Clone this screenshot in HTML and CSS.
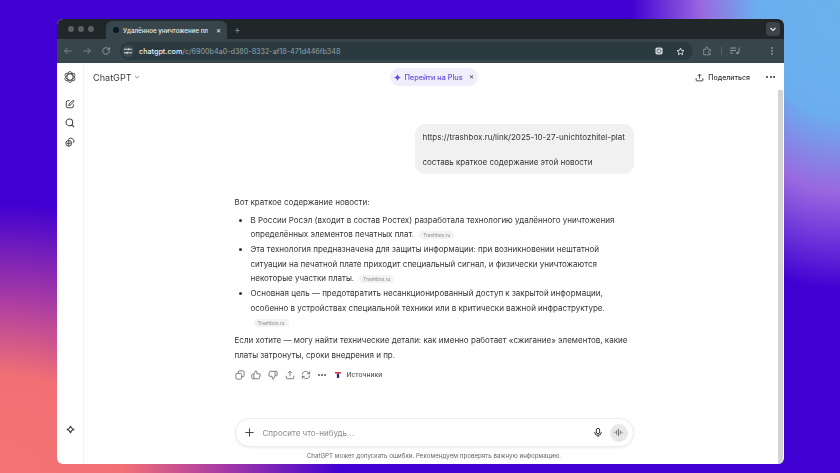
FILE: index.html
```html
<!DOCTYPE html>
<html lang="ru">
<head>
<meta charset="utf-8">
<title>ChatGPT</title>
<link rel="stylesheet" href="styles.css">
</head>
<body>
<div class="window">
  <div class="tabbar">
    <div class="lights"><i></i><i></i><i></i></div>
    <div class="tab">
      <span class="favicon"></span>
      <span class="tab-title">Удалённое уничтожение пл</span>
      <span class="tab-close">✕</span>
    </div>
    <span class="new-tab">+</span>
    <span class="tab-menu"><svg width="8" height="8" viewBox="0 0 8 8"><path d="M1.500 3 4 5.500 6.500 3" fill="none" stroke="#e4e8ea" stroke-width="1.200"/></svg></span>
  </div>
  <div class="toolbar">
    <svg class="nav" width="10" height="10" viewBox="0 0 10 10"><path d="M8.500 5h-7M4.500 2 1.500 5l3 3" fill="none" stroke="#74858c" stroke-width="1"/></svg>
    <svg class="nav" width="10" height="10" viewBox="0 0 10 10"><path d="M1.500 5h7M5.500 2l3 3-3 3" fill="none" stroke="#74858c" stroke-width="1"/></svg>
    <svg class="nav" width="10" height="10" viewBox="0 0 10 10"><path d="M8.300 5A3.300 3.300 0 1 1 7.300 2.600L8.500 3.700M8.500 1.500v2.200H6.300" fill="none" stroke="#8a9aa0" stroke-width="1"/></svg>
    <div class="omnibox">
      <span class="tune"><svg width="8" height="8" viewBox="0 0 9 9"><path d="M0 2.500h4M6 2.500h3M0 6.500h2.500M4.500 6.500h4.500" stroke="#e4e8ea" stroke-width="1" fill="none"/><circle cx="5" cy="2.500" r="1.100" fill="#e4e8ea"/><circle cx="3.500" cy="6.500" r="1.100" fill="#e4e8ea"/></svg></span>
      <span class="url"><b>chatgpt.com</b>/c/6900b4a0-d380-8332-af18-471d446fb348</span>
      <span class="omni-end">
        <svg width="8" height="8" viewBox="0 0 9 9"><rect x=".5" y=".5" width="8" height="8" rx="2" fill="#d4dadc"/><circle cx="4.500" cy="4.500" r="2.200" fill="none" stroke="#56666c"/></svg>
        <svg width="9" height="9" viewBox="0 0 24 24"><path d="m12 3 2.800 5.900 6.400.8-4.700 4.400 1.200 6.400-5.700-3.100-5.700 3.100 1.200-6.400-4.700-4.400 6.400-.8z" fill="none" stroke="#e4e8ea" stroke-width="2.400"/></svg>
      </span>
    </div>
    <svg class="ext" width="10" height="10" viewBox="0 0 24 24"><path d="M4 8h5V5a2.500 2.500 0 0 1 5 0v3h6v5h-2a2.500 2.500 0 0 0 0 5h2v3H4z" fill="none" stroke="#8c9a9f" stroke-width="2"/></svg>
    <span class="tool-sep"></span>
    <svg class="media" width="10" height="8" viewBox="0 0 10 8"><path d="M0 1h6M0 3.500h6M0 6h3M9 .5v5" stroke="#8c9a9f" fill="none"/><circle cx="7.500" cy="6" r="1.300" fill="#8c9a9f"/></svg>
    <span class="kebab"><i></i><i></i><i></i></span>
  </div>
  <div class="page">
    <aside class="sidebar">
      <svg class="logo" width="12" height="12" viewBox="0 0 24 24" fill="none" stroke="#505050" stroke-width="1.800"><ellipse cx="12" cy="12" rx="6" ry="11"/><ellipse cx="12" cy="12" rx="6" ry="11" transform="rotate(60 12 12)"/><ellipse cx="12" cy="12" rx="6" ry="11" transform="rotate(120 12 12)"/></svg>
      <div class="side-tools">
        <svg width="10" height="10" viewBox="0 0 24 24" fill="none" stroke="#444" stroke-width="2.400"><path d="M11 4H7a4 4 0 0 0-4 4v9a4 4 0 0 0 4 4h9a4 4 0 0 0 4-4v-4"/><path d="M19 3.500a2 2 0 0 1 2.500 2.500L13 14.500l-4 1 1-4z"/></svg>
        <svg width="10" height="10" viewBox="0 0 24 24" fill="none" stroke="#444" stroke-width="2.600"><circle cx="10.500" cy="10.500" r="8"/><path d="m16.500 16.500 5.500 5.500"/></svg>
        <svg width="10" height="10" viewBox="0 0 24 24" fill="none" stroke="#444" stroke-width="2.400"><circle cx="9" cy="15" r="7"/><path d="M8 6a7 7 0 0 1 10-2 7 7 0 0 1 2 10M4 15h10M9 8v14"/></svg>
      </div>
      <svg class="spark" width="9" height="9" viewBox="0 0 24 24" fill="none" stroke="#444" stroke-width="3"><path d="M12 2c1 6 4 9 10 10-6 1-9 4-10 10-1-6-4-9-10-10 6-1 9-4 10-10z"/></svg>
    </aside>
    <main class="main">
      <header class="head">
        <div class="brand">ChatGPT <svg width="6" height="6" viewBox="0 0 8 8"><path d="M1 2.500 4 5.500l3-3" fill="none" stroke="#777" stroke-width="1"/></svg></div>
        <div class="plus">
          <svg width="7" height="7" viewBox="0 0 24 24"><path d="M12 0c1.500 7 4.500 10.500 12 12-7.500 1.500-10.500 5-12 12-1.500-7-4.500-10.500-12-12C7.500 10.500 10.500 7 12 0z" fill="#5e50d8"/></svg>
          <span>Перейти на Plus</span>
          <span class="plus-x">✕</span>
        </div>
        <div class="head-right">
          <span class="share"><svg width="9" height="9" viewBox="0 0 24 24" fill="none" stroke="#333" stroke-width="2.400"><path d="M12 15V3M7.500 7.500 12 3l4.500 4.500M3 14v5a2 2 0 0 0 2 2h14a2 2 0 0 0 2-2v-5"/></svg>Поделиться</span>
          <span class="dots"><i></i><i></i><i></i></span>
        </div>
      </header>
      <div class="chat">
        <section class="thread">
          <div class="bubble">
            <p>https://trashbox.ru/link/2025-10-27-unichtozhitel-plat</p>
            <p>составь краткое содержание этой новости</p>
          </div>
          <div class="answer">
            <p>Вот краткое содержание новости:</p>
            <ul>
              <li>В России Росэл (входит в состав Ростех) разработала технологию удалённого уничтожения определённых элементов печатных плат. <span class="src">Trashbox.ru</span></li>
              <li>Эта технология предназначена для защиты информации: при возникновении нештатной ситуации на печатной плате приходит специальный сигнал, и физически уничтожаются некоторые участки платы. <span class="src">Trashbox.ru</span></li>
              <li>Основная цель — предотвратить несанкционированный доступ к закрытой информации, особенно в устройствах специальной техники или в критически важной инфраструктуре. <span class="src">Trashbox.ru</span></li>
            </ul>
            <p class="last">Если хотите — могу найти технические детали: как именно работает «сжигание» элементов, какие платы затронуты, сроки внедрения и пр.</p>
          </div>
          <div class="actions">
            <svg width="10" height="10" viewBox="0 0 24 24" fill="none" stroke="#666" stroke-width="2"><rect x="2" y="8" width="14" height="14" rx="3"/><path d="M8 8V5a3 3 0 0 1 3-3h8a3 3 0 0 1 3 3v8a3 3 0 0 1-3 3h-3"/></svg>
            <svg width="10" height="10" viewBox="0 0 24 24" fill="none" stroke="#666" stroke-width="2"><path d="M7 10v11H4a2 2 0 0 1-2-2v-7a2 2 0 0 1 2-2zm0 0 4-8a3 3 0 0 1 3 3v4h6a2 2 0 0 1 2 2.500l-1.500 8A2 2 0 0 1 18.500 21H7"/></svg>
            <svg width="10" height="10" viewBox="0 0 24 24" fill="none" stroke="#666" stroke-width="2"><path d="M17 14V3h3a2 2 0 0 1 2 2v7a2 2 0 0 1-2 2zm0 0-4 8a3 3 0 0 1-3-3v-4H4a2 2 0 0 1-2-2.500l1.500-8A2 2 0 0 1 5.500 3H17"/></svg>
            <svg width="10" height="10" viewBox="0 0 24 24" fill="none" stroke="#666" stroke-width="2"><path d="M12 15V3M7.500 7.500 12 3l4.500 4.500M3 14v5a2 2 0 0 0 2 2h14a2 2 0 0 0 2-2v-5"/></svg>
            <svg width="10" height="10" viewBox="0 0 24 24" fill="none" stroke="#666" stroke-width="2"><path d="M3 11a8 8 0 0 1 14-5l4 3M21 3v6h-6M21 13a8 8 0 0 1-14 5l-4-3M3 21v-6h6"/></svg>
            <span class="dots small"><i></i><i></i><i></i></span>
            <span class="sources"><svg width="6" height="6" viewBox="0 0 8 8"><path d="M0 0h8v2H0z" fill="#d83040"/><path d="M2.500 2h3v6h-3z" fill="#20306a"/></svg>Источники</span>
          </div>
        </section>
        <div class="composer">
          <svg width="9" height="9" viewBox="0 0 10 10"><path d="M5 .5v9M.5 5h9" stroke="#444" stroke-width="1.100"/></svg>
          <span class="placeholder">Спросите что-нибудь...</span>
          <svg class="mic" width="10" height="11" viewBox="0 0 24 24" fill="none" stroke="#333" stroke-width="2.400"><rect x="8" y="2" width="8" height="13" rx="4"/><path d="M4 11a8 8 0 0 0 16 0M12 19v4"/></svg>
          <span class="voice"><svg width="9" height="9" viewBox="0 0 10 10"><path d="M1 4v2M3 2.500v5M5 1v8M7 3v4M9 4.200v1.600" stroke="#666" stroke-width="1" fill="none"/></svg></span>
        </div>
        <footer class="note">ChatGPT может допускать ошибки. Рекомендуем проверять важную информацию.</footer>
      </div>
      <div class="scrollbar"></div>
    </main>
  </div>
</div>
</body>
</html>
```

FILE: styles.css
```css
* { box-sizing: border-box; }
html, body { margin: 0; height: 473px; overflow: hidden; }
body {
  font-family: Inter, "Liberation Sans", sans-serif;
  padding: 19px 0 0 57px;
  background-color: #4000d2;
  background-image:
    radial-gradient(ellipse 340px 270px at 0 473px, #f47474 0%, #f27074 36%, #b040a0 62%, rgba(64,0,210,0) 100%),
    radial-gradient(ellipse 210px 290px at 840px 0, #6ab2ec 0%, #6aaeee 40%, #9a68e0 66%, rgba(64,0,210,0) 100%);
}
.window {
  width: 727px;
  height: 445px;
  border-radius: 6px;
  overflow: hidden;
  background: #fff;
  display: flex;
  flex-direction: column;
  filter: blur(.4px);
}

/* tabs */
.tabbar {
  height: 20px;
  background: #212628;
  display: flex;
  align-items: flex-end;
  flex: none;
}
.lights { display: flex; gap: 4px; padding: 0 0 7px 11px; width: 49px; flex: none; }
.lights i { width: 6px; height: 6px; border-radius: 50%; background: #5c6264; flex: none; }
.tab {
  width: 121px;
  height: 18px;
  background: #38464c;
  border-radius: 6px 6px 0 0;
  display: flex;
  align-items: center;
  padding: 0 6px 0 5px;
  color: #e8ecee;
  font-size: 6.200px;
  font-weight: 500;
  flex: none;
  margin-right: 7px;
}
.favicon { width: 6px; height: 6px; border-radius: 50%; background: #0d1a22; flex: none; margin-right: 4px; margin-left: 2px; }
.tab-title { flex: 1; white-space: nowrap; min-width: 0; }
.tab-close { font-size: 6px; margin-left: 5px; color: #f0f2f3; }
.new-tab { color: #7e8a8e; font-size: 10px; line-height: 18px; height: 19px; }
.tab-menu {
  margin-left: auto;
  margin-right: 4px;
  margin-bottom: 3px;
  width: 14px;
  height: 14px;
  border-radius: 4px;
  background: #3c4448;
  display: flex;
  align-items: center;
  justify-content: center;
}

/* toolbar */
.toolbar {
  height: 24px;
  background: #38464c;
  display: flex;
  align-items: center;
  flex: none;
  padding-left: 6px;
}
.nav { margin-right: 9px; flex: none; }
.omnibox {
  width: 573px;
  height: 18px;
  border-radius: 9px;
  background: #2b3a40;
  display: flex;
  align-items: center;
  padding-left: 2px;
  font-size: 7.200px;
  color: #93a3a9;
  flex: none;
}
.tune {
  width: 12px; height: 12px; border-radius: 50%;
  background: #3c4c52;
  display: flex; align-items: center; justify-content: center;
  margin-right: 5px;
}
.url { white-space: nowrap; }
.url b { color: #eaeef0; font-weight: 500; }
.omni-end { margin-left: auto; display: flex; gap: 13px; align-items: center; padding-right: 8px; }
.ext { margin-left: 9px; flex: none; }
.tool-sep { width: 1px; height: 8px; background: #54646a; margin-left: 9px; flex: none; }
.media { margin-left: 8px; flex: none; }
.kebab { display: flex; flex-direction: column; gap: 1.500px; margin-left: 31px; }
.kebab i { width: 1.500px; height: 1.500px; border-radius: 50%; background: #7c8a90; }

/* page */
.page { flex: 1; display: flex; min-height: 0; }
.sidebar {
  width: 27px;
  flex: none;
  border-right: 1px solid #f2f2f2;
  display: flex;
  flex-direction: column;
  align-items: center;
  padding-top: 8px;
}
.side-tools { display: flex; flex-direction: column; gap: 9px; margin-top: 16px; align-items: center; }
.spark { margin-top: auto; margin-bottom: 30px; }

.main { flex: 1; display: flex; flex-direction: column; position: relative; min-width: 0; }
.head {
  height: 28px;
  flex: none;
  display: flex;
  align-items: center;
  padding: 0 9px;
  position: relative;
}
.brand { font-size: 9.100px; color: #3a3a3a; display: flex; align-items: center; gap: 2px; }
.plus {
  position: absolute;
  left: 306px;
  top: 5px;
  width: 88px;
  height: 18px;
  border-radius: 9px;
  background: #f1eefc;
  color: #5e50d8;
  font-size: 7.300px;
  font-weight: 500;
  display: flex;
  align-items: center;
  justify-content: center;
  gap: 3px;
}
.plus-x { color: #333; font-size: 5.500px; margin-left: 3px; }
.head-right { margin-left: auto; display: flex; align-items: center; gap: 16px; }
.share { display: flex; align-items: center; gap: 4px; font-size: 7px; font-weight: 500; color: #333; }
.dots { display: flex; gap: 1.500px; }
.dots i { width: 2px; height: 2px; border-radius: 50%; background: #333; }
.dots.small i { background: #666; width: 1.600px; height: 1.600px; }

.chat { flex: 1; display: flex; flex-direction: column; min-height: 0; }
.thread {
  flex: 1;
  width: 399px;
  margin: 0 auto;
  padding-top: 33px;
  font-size: 8px;
  line-height: 14.650px;
  color: #333;
}
.bubble {
  width: 219px;
  height: 50px;
  margin-left: auto;
  background: #f1f1f1;
  border-radius: 10px;
  padding: 5.500px 8px;
}
.bubble p { margin: 0 0 10.500px; white-space: nowrap; }
.answer { margin-top: 21px; }
.answer p { margin: 0; }
.answer ul { margin: 3px 0 3px; padding: 0 0 0 16px; list-style: disc; }
.src {
  display: inline-block;
  font-size: 4.800px;
  line-height: 8px;
  padding: 0 4px;
  border-radius: 4px;
  background: #f3f3f3;
  color: #888;
  margin-left: 3px;
  vertical-align: 0;
}
.actions { display: flex; align-items: center; gap: 6.700px; margin-top: 6px; height: 14px; }
.sources { display: flex; align-items: center; gap: 5px; font-size: 6.700px; font-weight: 500; color: #555; margin-left: 3px; }

.composer {
  flex: none;
  width: 399px;
  height: 29px;
  margin: 0 auto;
  border-radius: 14.500px;
  border: 1px solid #ececec;
  box-shadow: 0 1px 3px rgba(0,0,0,.08);
  background: #fff;
  display: flex;
  align-items: center;
  padding: 0 5px 0 9px;
  gap: 9px;
}
.placeholder { color: #8c8c8c; font-size: 8px; flex: 1; }
.mic { margin-right: -2px; }
.voice {
  width: 18px; height: 18px; border-radius: 50%;
  background: #e8e8e8;
  display: flex; align-items: center; justify-content: center;
}
.note {
  flex: none;
  height: 17px;
  font-size: 6.200px;
  line-height: 17px;
  color: #666;
  text-align: center;
}
.scrollbar {
  position: absolute;
  right: 1px;
  top: 27px;
  bottom: 0;
  width: 5px;
  background: #d2d6d6;
}
```
